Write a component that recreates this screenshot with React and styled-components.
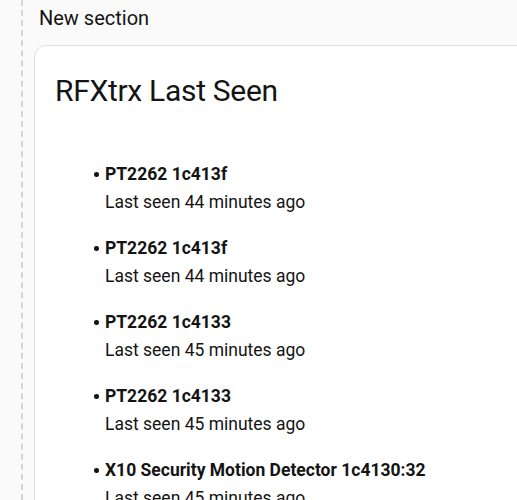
import styled, { createGlobalStyle } from "styled-components";

const GlobalStyle = createGlobalStyle`
  html, body {
    margin: 0;
    padding: 0;
    background: #fafafa;
    font-family: Roboto, "Noto Sans", sans-serif;
    color: #141414;
  }
`;

const Page = styled.div`
  display: flex;
  height: 500px;
  overflow: hidden;
  padding-left: 21px;
`;

const Column = styled.div`
  flex: 1;
  min-width: 0;
  padding-left: 11px;
  border-left: 2px dashed #d4d4d4;
  margin-right: -40px;
`;

const SectionTitle = styled.h2`
  margin: 0;
  padding: 4px 0 0 5px;
  height: 45px;
  box-sizing: border-box;
  font-size: 20px;
  font-weight: 400;
  line-height: 28px;
  color: #141414;
`;

const Card = styled.div`
  background: #fff;
  border: 1px solid #e0e0e0;
  border-radius: 12px;
  min-height: 600px;
`;

const CardHeader = styled.h1`
  margin: 0;
  padding: 21px 20px 0 20px;
  font-size: 30px;
  font-weight: 400;
  line-height: 48px;
  letter-spacing: -0.3px;
`;

const List = styled.ul`
  margin: 0;
  padding: 45px 0 0 70px;
  list-style: none;
`;

const Item = styled.li`
  position: relative;
  font-size: 17.5px;
  line-height: 28px;
  margin-bottom: 18px;

  &::before {
    content: "";
    position: absolute;
    left: -11px;
    top: 12px;
    width: 4.5px;
    height: 4.5px;
    border-radius: 50%;
    background: #141414;
  }
`;

const Name = styled.div`
  font-weight: 700;
`;

const Seen = styled.div`
  font-weight: 400;
`;

const devices = [
  { name: "PT2262 1c413f", seen: "Last seen 44 minutes ago" },
  { name: "PT2262 1c413f", seen: "Last seen 44 minutes ago" },
  { name: "PT2262 1c4133", seen: "Last seen 45 minutes ago" },
  { name: "PT2262 1c4133", seen: "Last seen 45 minutes ago" },
  { name: "X10 Security Motion Detector 1c4130:32", seen: "Last seen 45 minutes ago" },
];

const App = () => {
  return (
    <>
      <GlobalStyle />
      <Page>
        <Column>
          <SectionTitle>New section</SectionTitle>
          <Card>
            <CardHeader>RFXtrx Last Seen</CardHeader>
            <List>
              {devices.map((d, i) => (
                <Item key={i}>
                  <Name>{d.name}</Name>
                  <Seen>{d.seen}</Seen>
                </Item>
              ))}
            </List>
          </Card>
        </Column>
      </Page>
    </>
  );
};

export default App;
